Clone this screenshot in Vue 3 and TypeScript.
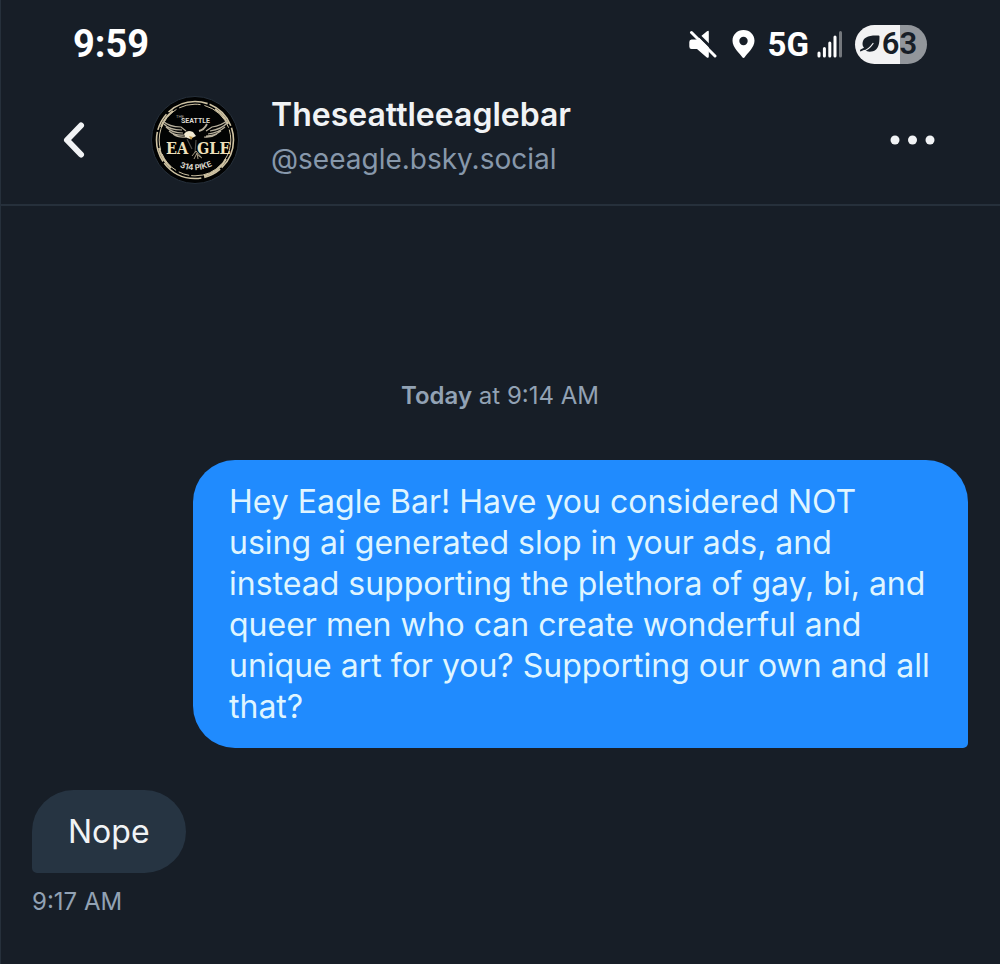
<script setup lang="ts">
interface Message {
  id: number
  text: string
  mine: boolean
  time?: string
}

const clock = '9:59'
const battery = 63
const network = '5G'

const contact = {
  name: 'Theseattleeaglebar',
  handle: '@seeagle.bsky.social',
}

const messages: Message[] = [
  {
    id: 1,
    mine: true,
    text: 'Hey Eagle Bar! Have you considered NOT using ai generated slop in your ads, and instead supporting the plethora of gay, bi, and queer men who can create wonderful and unique art for you? Supporting our own and all that?',
  },
  { id: 2, mine: false, text: 'Nope', time: '9:17 AM' },
]
</script>

<template>
  <div class="screen">
    <div class="status">
      <span class="clock">{{ clock }}</span>
      <div class="indicators">
        <svg class="mute" width="28" height="28" viewBox="0 0 28 28" aria-label="Muted">
          <path d="M2.500 9.500Q.3 9.500.3 12V16.500Q.3 19 2.500 19H8L17.500 27.300Q19.800 28.800 19.800 26.300V1.800Q19.800 0 18 1.300L8 9.500Z" fill="#fff" />
          <path d="M3.500 -1L30 25.500" stroke="#171e27" stroke-width="3" />
          <path d="M2.500 2.500L26 26" stroke="#fff" stroke-width="3" stroke-linecap="round" />
        </svg>
        <svg class="pin" width="23" height="28" viewBox="0 0 23 28" aria-label="Location">
          <path fill="#fff" fill-rule="evenodd" d="M11.500 0C5 0 .5 4.800.5 10.700C.5 17.500 8 23.500 10.300 27.200Q11.500 28.800 12.700 27.200C15 23.500 22.500 17.500 22.500 10.700C22.500 4.800 18 0 11.500 0ZM11.500 6.800a4.200 4.200 0 1 1 0 8.400a4.200 4.200 0 1 1 0-8.400Z" />
        </svg>
        <span class="network">{{ network }}</span>
        <svg class="signal" width="26" height="28" viewBox="0 0 26 28" aria-label="Signal">
          <g stroke="#fff" stroke-width="3" stroke-linecap="round">
            <path d="M2 23V26M7.400 18.500V26M12.800 13V26M18 7V26" />
            <path d="M23.500 2.500V26" opacity=".4" />
          </g>
        </svg>
        <div class="battery">
          <svg width="20" height="18" viewBox="0 0 20 18" aria-hidden="true">
            <path fill="#171e27" d="M18.500.5C9 0 2.500 2 2.500 9Q2.500 11.500 4 12.800L1 14.200Q-.5 15 .3 16.500L5 14.800C7 17 10 17 13 16.200C18.500 14.700 19.500 9 19.500 1.500Q19.500.5 18.500.5Z" />
            <path d="M3 16.300Q9 14.500 13 8.500" fill="none" stroke="#f2f2f3" stroke-width="1.300" stroke-linecap="round" />
          </svg>
          <span>{{ battery }}</span>
        </div>
      </div>
    </div>

    <header class="header">
      <button class="back" type="button" aria-label="Back">
        <svg width="24" height="38" viewBox="0 0 24 38">
          <path d="M19 4.500L5 19L19 33.500" fill="none" stroke="#f1f3f5" stroke-width="6" stroke-linecap="round" stroke-linejoin="round" />
        </svg>
      </button>
      <svg class="avatar" width="88" height="88" viewBox="0 0 88 88" role="img" aria-label="The Seattle Eagle, 314 Pike">
        <defs><path id="pike-arc" d="M27 70Q46 80 68 66" /></defs>
        <circle cx="44" cy="44" r="43.500" fill="#020303" stroke="#26303b" />
        <g fill="none" stroke="#cfc3a3">
          <circle cx="44" cy="44" r="38.500" stroke-width="1.600" stroke-dasharray="31 2 18 3 42 2" />
          <circle cx="44" cy="44" r="35.800" stroke-width="1" stroke-dasharray="22 4 34 2 11 3" />
          <path d="M10 31Q14 21 22 15M64 13Q73 19 77 28M8 52Q11 64 20 72M53 80Q68 76 75 63" stroke-width="2" />
        </g>
        <g fill="none" stroke="#b8b09c" stroke-width="1.200">
          <path d="M12 25Q18 31 30 31L35 35M13 28Q18 34 31 34M15 31Q21 37 32 37M18 35Q24 40 33 39M22 38Q27 42 35 41" />
          <path d="M77 24Q70 30 61 31L55 35M76 27Q71 33 59 35M74 31Q67 37 57 38M70 35Q63 40 55 40M66 38Q60 42 53 41" />
          <path d="M48 35Q53 34 56 28" stroke-width="1.800" />
          <path d="M36 43L41 53M45 44L44 57" stroke="#4f4d47" />
        </g>
        <text class="logo-small" x="30" y="27" fill="#ddd9d0">SEATTLE</text>
        <text class="logo-the" x="25" y="22" fill="#aaa69b">THE</text>
        <path d="M33 38Q36 33 42 36L45 40L39 43L34 41Z" fill="#f2ead2" />
        <path d="M38 40L42 41L40 44Z" fill="#c59c4c" />
        <path d="M41 60L45 55L50 61M43 63L46 57L47 63M45 58L51 62" fill="none" stroke="#a49a82" stroke-width="1" />
        <text class="logo-large" x="15" y="58" fill="#eee0bb">EA</text>
        <text class="logo-large" x="46" y="58" fill="#eee0bb">GLE</text>
        <text class="logo-street" fill="#d8d4ca"><textPath href="#pike-arc" startOffset="4%">314 PIKE</textPath></text>
      </svg>
      <div class="identity">
        <h1>{{ contact.name }}</h1>
        <p>{{ contact.handle }}</p>
      </div>
      <button class="more" type="button" aria-label="More options">
        <svg width="46" height="10" viewBox="0 0 46 10" fill="#f1f3f5">
          <circle cx="5" cy="5" r="4.500" /><circle cx="22.500" cy="5" r="4.500" /><circle cx="40" cy="5" r="4.500" />
        </svg>
      </button>
    </header>

    <main class="thread">
      <p class="day"><strong>Today</strong> at 9:14 AM</p>
      <div v-for="m in messages" :key="m.id" class="message" :class="{ mine: m.mine }">
        <p class="bubble">{{ m.text }}</p>
        <time v-if="m.time">{{ m.time }}</time>
      </div>
    </main>
  </div>
</template>

<style>
body {
  margin: 0;
  background: #171e27;
}
</style>

<style scoped>
.screen {
  box-sizing: border-box;
  min-height: 100vh;
  border-left: 1px solid #26303b;
  background: #171e27;
  color: #f1f3f5;
  font-family: Inter, "Liberation Sans", sans-serif;
}

h1,
p {
  margin: 0;
}

button {
  display: flex;
  padding: 0;
  border: 0;
  background: none;
}

.status {
  display: flex;
  align-items: center;
  justify-content: space-between;
  height: 88px;
  padding: 0 73px 0 72px;
  color: #fff;
  font-family: Roboto, sans-serif;
  font-weight: 700;
}

.clock {
  font-size: 38px;
}

.indicators {
  display: flex;
  align-items: center;
}

.pin {
  margin: 0 13px 0 15px;
}

.network {
  font-size: 33px;
}

.signal {
  margin: 0 12px 0 8px;
}

.battery {
  display: flex;
  align-items: center;
  justify-content: center;
  gap: 2px;
  width: 72px;
  height: 39px;
  box-sizing: border-box;
  padding-right: 5px;
  border-radius: 20px;
  background: linear-gradient(90deg, #f2f2f3 62%, #92969b 62%);
  color: #171e27;
  font-size: 31px;
  font-weight: 600;
  line-height: 36px;
}

.header {
  display: flex;
  align-items: center;
  height: 118px;
  box-sizing: border-box;
  padding: 0 64px 12px 61px;
  border-bottom: 2px solid #26303b;
}

.avatar {
  margin: 0 32px 0 65px;
}

.identity {
  flex: 1;
  padding-bottom: 6px;
}

h1 {
  font-size: 32px;
  font-weight: 600;
  line-height: 44px;
}

.identity p {
  color: #8798ab;
  font-size: 28px;
  line-height: 44px;
}

.logo-small {
  font: 700 7px Roboto, sans-serif;
}

.logo-the {
  font: 400 4px "Liberation Sans", sans-serif;
}

.logo-large {
  font: 700 16px "DejaVu Serif Condensed", "DejaVu Serif", serif;
}

.logo-street {
  font: 700 8px Inter, sans-serif;
}

.thread {
  display: flex;
  flex-direction: column;
  padding: 174px 32px 48px 31px;
}

.day,
time {
  color: #92a2b4;
  font-size: 24px;
  line-height: 32px;
}

.day {
  margin-bottom: 48px;
  text-align: center;
}

.day strong {
  font-weight: 600;
}

.message {
  display: flex;
  flex-direction: column;
  align-items: flex-start;
  margin-bottom: 42px;
}

.message.mine {
  align-items: flex-end;
}

.bubble {
  box-sizing: border-box;
  max-width: calc(100% - 161px);
  padding: 21px 36px;
  border-radius: 42px 42px 42px 5px;
  background: #263442;
  font-size: 32px;
  line-height: 41px;
}

.mine .bubble {
  border-radius: 42px 42px 5px 42px;
  background: #208bfe;
  color: #dff5ff;
}

time {
  margin-top: 13px;
}
</style>
